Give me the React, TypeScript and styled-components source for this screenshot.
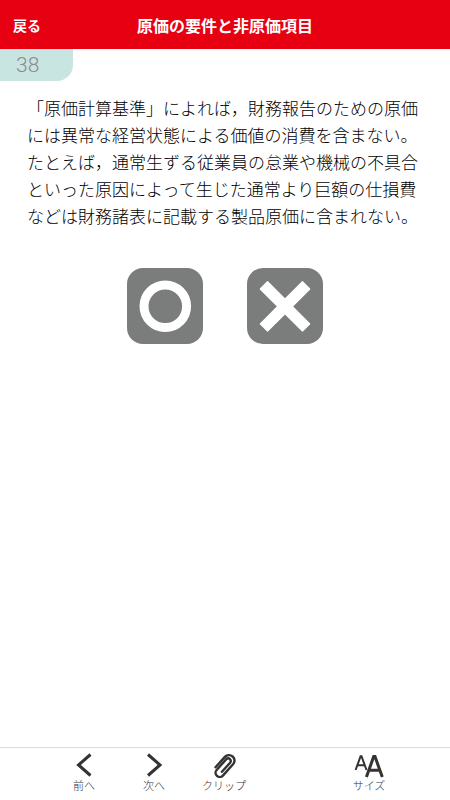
import React from "react";
import styled, { createGlobalStyle } from "styled-components";

const GlobalStyle = createGlobalStyle`
  * { box-sizing: border-box; }
  body {
    margin: 0;
    background: #fff;
    color: #000;
    font-family: "Noto Sans CJK JP", sans-serif;
  }
  button {
    padding: 0;
    border: 0;
    background: none;
    color: inherit;
    font: inherit;
    cursor: pointer;
  }
`;

const Screen = styled.div`
  display: flex;
  flex-direction: column;
  min-height: 100vh;
`;

const Header = styled.header`
  display: grid;
  grid-template-columns: 1fr auto 1fr;
  align-items: center;
  height: 49px;
  padding: 0 13px;
  background: #e60012;
  color: #fff;
`;

const BackButton = styled.button`
  && {
    justify-self: start;
    font-size: 14px;
    font-weight: 700;
    line-height: 24px;
  }
`;

const Title = styled.h1`
  margin: 0;
  font-size: 16px;
  font-weight: 700;
  line-height: 24px;
`;

const Main = styled.main`
  flex: 1;
`;

const QuestionNumber = styled.div`
  width: 73px;
  height: 32px;
  padding-left: 16px;
  border-bottom-right-radius: 16px;
  background: #c9e5e2;
  color: #8c8c8c;
  font-family: Roboto, sans-serif;
  font-size: 21px;
  font-weight: 300;
  line-height: 32px;
`;

const Question = styled.p`
  margin: 13px 0 0;
  padding: 0 27px;
  font-size: 17px;
  font-weight: 300;
  line-height: 27px;
`;

const Answers = styled.div`
  display: flex;
  justify-content: center;
  gap: 44px;
  margin-top: 39px;
`;

const AnswerButton = styled.button`
  && {
    width: 76px;
    height: 76px;
    border-radius: 16px;
    background: #7b7d7c;
  }
`;

const AnswerIcon = styled.svg`
  display: block;
  width: 76px;
  height: 76px;
`;

const Toolbar = styled.nav`
  display: flex;
  height: 53px;
  padding: 0 46px 0 49px;
  border-top: 1px solid #dcdcdc;
`;

const Tool = styled.button<{ $end?: boolean }>`
  && {
    display: flex;
    flex-direction: column;
    align-items: center;
    width: 70px;
    margin-left: ${({ $end }) => ($end ? "auto" : "0")};
    padding-top: 4px;
    color: #333;
    font-size: 11px;
    font-weight: 300;
    line-height: 15px;
  }
`;

const ToolIcon = styled.svg`
  display: block;
  height: 26px;
  fill: none;
  stroke: #333;
`;

export default function App() {
  return (
    <Screen>
      <GlobalStyle />
      <Header>
        <BackButton type="button">戻る</BackButton>
        <Title>原価の要件と非原価項目</Title>
      </Header>
      <Main>
        <QuestionNumber>38</QuestionNumber>
        <Question lang="ja">
          「原価計算基準」によれば，財務報告のための原価には異常な経営状態による価値の消費を含まない。たとえば，通常生ずる従業員の怠業や機械の不具合といった原因によって生じた通常より巨額の仕損費などは財務諸表に記載する製品原価に含まれない。
        </Question>
        <Answers>
          <AnswerButton type="button" aria-label="正しい">
            <AnswerIcon viewBox="0 0 76 76">
              <circle cx="38.3" cy="38.3" r="21.3" fill="none" stroke="#fff" strokeWidth="9" />
            </AnswerIcon>
          </AnswerButton>
          <AnswerButton type="button" aria-label="誤り">
            <AnswerIcon viewBox="0 0 76 76">
              <g transform="translate(38 38.4) rotate(45)" fill="#fff">
                <rect x="-30.5" y="-5.8" width="61" height="11.6" rx="1" />
                <rect x="-5.8" y="-30.5" width="11.6" height="61" rx="1" />
              </g>
            </AnswerIcon>
          </AnswerButton>
        </Answers>
      </Main>
      <Toolbar>
        <Tool type="button">
          <ToolIcon width="26" viewBox="0 0 26 26" strokeWidth="3">
            <path d="M19.5 2.5 7.5 13l12 10.5" />
          </ToolIcon>
          前へ
        </Tool>
        <Tool type="button">
          <ToolIcon width="26" viewBox="0 0 26 26" strokeWidth="3">
            <path d="M7 2.5 19 13 7 23.5" />
          </ToolIcon>
          次へ
        </Tool>
        <Tool type="button">
          <ToolIcon width="26" viewBox="0 0 26 26" strokeWidth="2.4" strokeLinecap="round">
            <path
              transform="translate(13.5 14) rotate(-48)"
              d="M-7-5.8H7A5.5 5.5 0 0 1 7 5.2H-8.2A4.2 4.2 0 0 1-8.2-3.2H6.2A2.6 2.6 0 0 1 6.2 2H-6"
            />
          </ToolIcon>
          クリップ
        </Tool>
        <Tool type="button" $end>
          <ToolIcon width="30" viewBox="0 0 30 26">
            <path strokeWidth="2" d="M1.6 18 6.6 4.2h.9L12.5 18M3.2 13.3h7.7" />
            <path strokeWidth="3" d="M12.4 25 19.7 4.6h1.3L28.3 25M14.8 18.2h11.2" />
          </ToolIcon>
          サイズ
        </Tool>
      </Toolbar>
    </Screen>
  );
}
